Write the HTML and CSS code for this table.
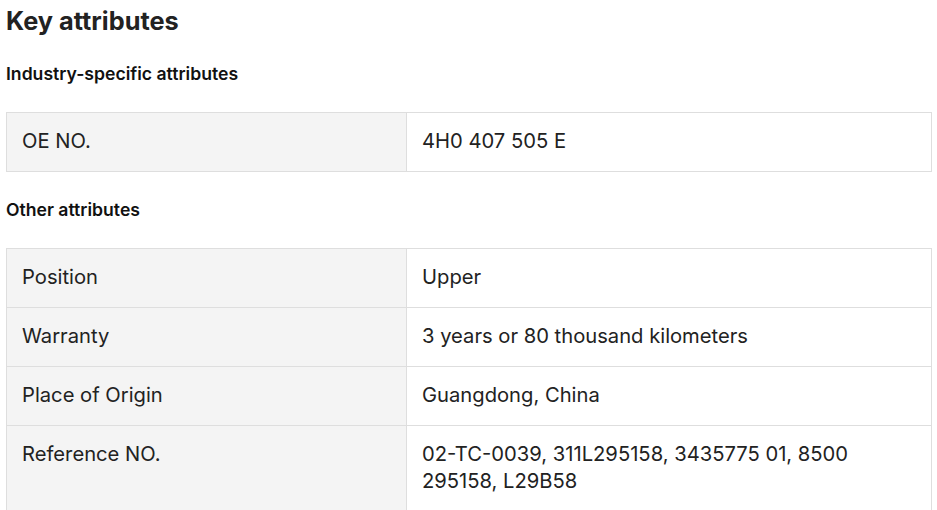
FILE: index.html
```html
<!DOCTYPE html>
<html lang="en">
<head>
<meta charset="utf-8">
<title>Key attributes</title>
<link rel="stylesheet" href="styles.css">
</head>
<body>
<section class="attrs">
  <h2 class="attrs-title">Key attributes</h2>
  <h3 class="attrs-group">Industry-specific attributes</h3>
  <table class="attrs-table">
    <tr><th>OE NO.</th><td>4H0 407 505 E</td></tr>
  </table>
  <h3 class="attrs-group">Other attributes</h3>
  <table class="attrs-table">
    <tr><th>Position</th><td>Upper</td></tr>
    <tr><th>Warranty</th><td>3 years or 80 thousand kilometers</td></tr>
    <tr><th>Place of Origin</th><td>Guangdong, China</td></tr>
    <tr><th>Reference NO.</th><td>02-TC-0039, 311L295158, 3435775 01, 8500 295158, L29B58</td></tr>
  </table>
</section>
</body>
</html>
```
FILE: styles.css
```css
html, body {
  margin: 0;
  padding: 0;
  background: #fff;
}
body {
  font-family: Inter, "Noto Sans", sans-serif;
  color: #222;
}
.attrs {
  width: 926px;
  padding: 5px 0 0 6px;
  display: flex;
  flex-direction: column;
  gap: 26px;
}
.attrs-title {
  margin: 0 0 -1px;
  font-size: 25.3px;
  line-height: 32px;
  font-weight: 700;
  color: #222;
}
.attrs-group {
  margin: 0;
  font-size: 17.6px;
  line-height: 24px;
  font-weight: 600;
  color: #111;
}
.attrs-table {
  width: 100%;
  border-collapse: collapse;
  table-layout: fixed;
}
.attrs-table th,
.attrs-table td {
  border: 1px solid #dedede;
  padding: 14px 15px 17px;
  font-size: 20.2px;
  line-height: 27px;
  font-weight: 400;
  text-align: left;
  vertical-align: top;
  color: #222;
}
.attrs-table th {
  width: 400px;
  background: #f4f4f4;
  box-sizing: border-box;
}
```
